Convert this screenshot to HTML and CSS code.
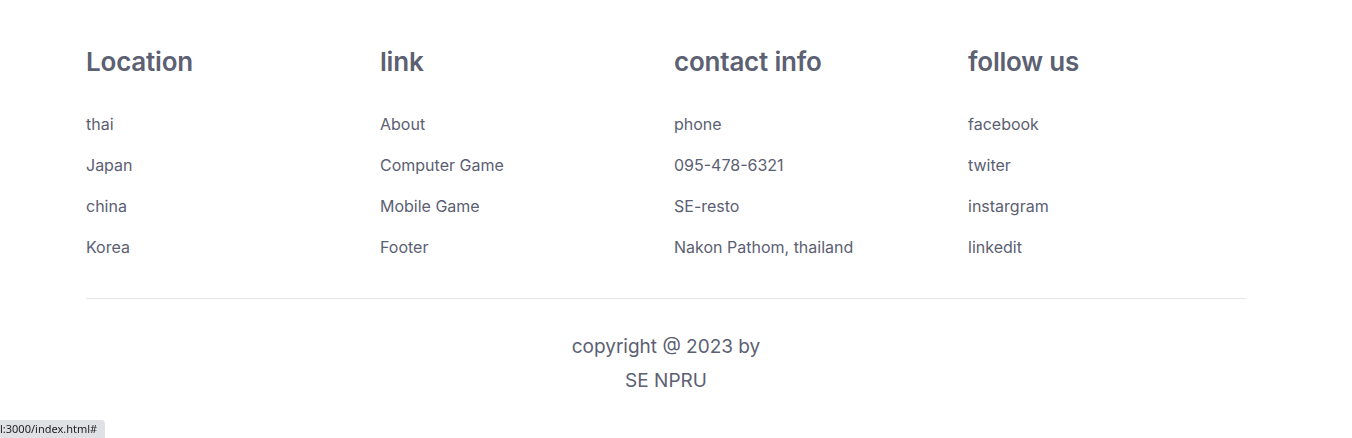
FILE: index.html
```html
<!DOCTYPE html>
<html>
<head>
<meta charset="utf-8">
<link rel="stylesheet" href="styles.css">
</head>
<body>
<footer class="footer">
  <div class="cols">
    <div class="col">
      <h3 class="title">Location</h3>
      <ul class="list">
        <li><a href="#">thai</a></li>
        <li><a href="#">Japan</a></li>
        <li><a href="#">china</a></li>
        <li><a href="#">Korea</a></li>
      </ul>
    </div>
    <div class="col">
      <h3 class="title">link</h3>
      <ul class="list">
        <li><a href="#">About</a></li>
        <li><a href="#">Computer Game</a></li>
        <li><a href="#">Mobile Game</a></li>
        <li><a href="#">Footer</a></li>
      </ul>
    </div>
    <div class="col">
      <h3 class="title">contact info</h3>
      <ul class="list">
        <li><a href="#">phone</a></li>
        <li><a href="#">095-478-6321</a></li>
        <li><a href="#">SE-resto</a></li>
        <li><a href="#">Nakon Pathom, thailand</a></li>
      </ul>
    </div>
    <div class="col">
      <h3 class="title">follow us</h3>
      <ul class="list">
        <li><a href="#">facebook</a></li>
        <li><a href="#">twiter</a></li>
        <li><a href="#">instargram</a></li>
        <li><a href="#">linkedit</a></li>
      </ul>
    </div>
  </div>
  <div class="credit">copyright @ 2023 by<br>SE NPRU</div>
</footer>
<div class="status">l:3000/index.html#</div>
</body>
</html>
```
FILE: styles.css
```css
* { box-sizing: border-box; }
html, body { margin: 0; padding: 0; background: #fff; }
body { font-family: Inter, "Noto Sans", sans-serif; color: #5b6072; padding-right: 20px; }
.footer { width: 1160px; margin: 0 auto; padding-top: 44px; }
.cols { display: grid; grid-template-columns: repeat(4, 278px); column-gap: 16px; padding-bottom: 40px; border-bottom: 1px solid #e6e6e6; }
.title { margin: 0 0 33px; font-size: 26px; font-weight: 600; line-height: 36px; color: #5b6072; letter-spacing: -0.2px; }
.list { list-style: none; margin: 0; padding: 0; display: flex; flex-direction: column; gap: 19px; }
.list li { line-height: 22px; font-size: 16px; }
.list a { color: #5b6072; text-decoration: none; }
.credit { text-align: center; font-size: 19px; line-height: 34px; padding-top: 31px; }
.status { position: fixed; left: 0; bottom: 0; height: 18px; padding: 0 8px 0 0; background: #dfe1e5; border-top-right-radius: 4px; font-family: "Segoe UI", "Noto Sans", sans-serif; font-size: 11px; line-height: 18px; color: #222; }
```
